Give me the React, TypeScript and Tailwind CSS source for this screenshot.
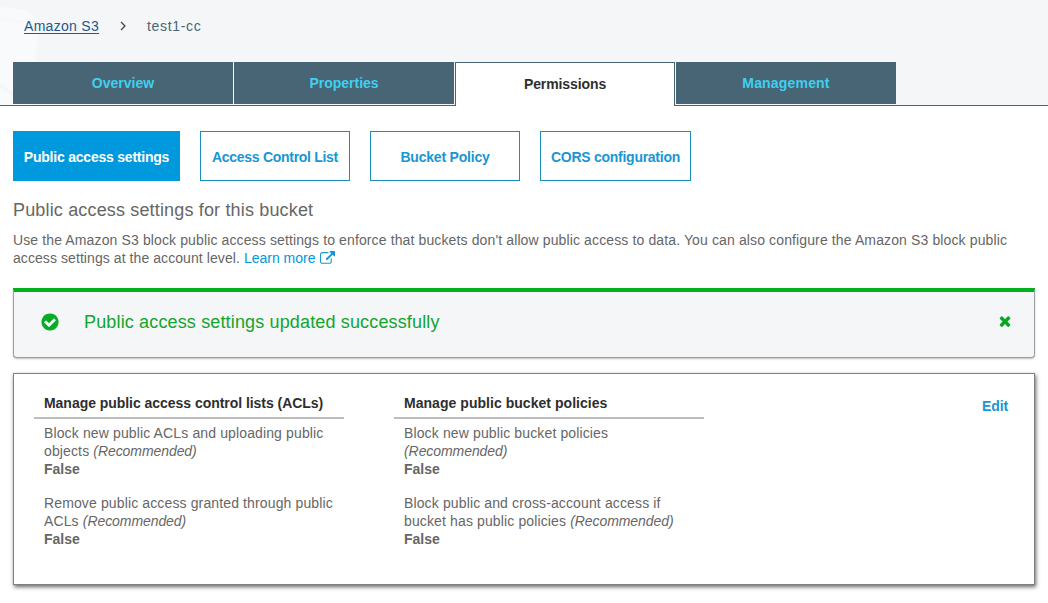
import type { ReactNode } from "react";

const tabs = [
  { label: "Overview", tracking: "tracking-normal" },
  { label: "Properties", tracking: "tracking-normal" },
  { label: "Permissions", tracking: "tracking-[-0.1px]" },
  { label: "Management", tracking: "tracking-[0.18px]" },
];

function Tab({ label, tracking, active }: { label: string; tracking: string; active: boolean }) {
  if (active) {
    return (
      <button className={`h-11 w-[220px] border border-b-0 border-[#486575] bg-white text-[14px] font-bold text-[#2e2e2e] ${tracking}`}>
        {label}
      </button>
    );
  }
  return (
    <button className={`mb-[2px] h-[42px] w-[220px] bg-[#486575] text-[14px] font-bold text-[#3fd0ef] ${tracking}`}>
      {label}
    </button>
  );
}

const pills = [
  { label: "Public access settings", style: "w-[167px] tracking-[-0.22px] border-[#0099dd] bg-[#0099dd] text-white" },
  { label: "Access Control List", style: "w-[150px] tracking-[-0.29px] border-[#1d8dc0] text-[#1996d3]" },
  { label: "Bucket Policy", style: "w-[150px] tracking-[-0.2px] border-[#1d8dc0] text-[#1996d3]" },
  { label: "CORS configuration", style: "w-[151px] tracking-[-0.27px] border-[#1d8dc0] text-[#1996d3]" },
];

function Setting({ children }: { children: ReactNode }) {
  return (
    <div className="mb-4 ml-[10px] w-[292px] leading-[18px]">
      <p className="tracking-[0.13px]">
        {children} <i className="tracking-[-0.07px]">(Recommended)</i>
      </p>
      <p className="font-bold">False</p>
    </div>
  );
}

function Column({ title, tracking, children }: { title: string; tracking: string; children: ReactNode }) {
  return (
    <section className="w-[310px]">
      <h3 className={`mb-[5px] h-[27px] border-b-2 border-[#bdbdbd] pl-[10px] leading-[22px] font-bold text-[#2e2e2e] ${tracking}`}>
        {title}
      </h3>
      {children}
    </section>
  );
}

export default function App() {
  return (
    <div className="h-[603px] overflow-hidden bg-white font-['Liberation_Sans',Arial,sans-serif] text-[14px] text-[#666666]">
      <header className="relative flex h-[106px] flex-col justify-between border-b border-[#486575] bg-[#f4f6f8]">
        <svg className="absolute top-0 left-0" width="50" height="105" viewBox="0 0 50 105" fill="none">
          <path d="M0 7C20 8 38 13 38 22C38 45 35 65 32 105H0Z" fill="#f9fafb" />
          <path d="M0 18C15 23 28 22 38 20" stroke="#f6f8f9" strokeWidth="3" />
          <path d="M0 85L13 95" stroke="#f4f6f8" strokeWidth="4" />
        </svg>
        <nav className="relative flex h-[52px] items-center pl-6">
          <a className="tracking-[0.3px] text-[#20588f] underline underline-offset-2">Amazon S3</a>
          <svg className="mr-5 ml-5" width="8" height="10" viewBox="0 0 8 10" fill="none" stroke="#444" strokeWidth="1.3">
            <path d="M2 1L6 5L2 9" />
          </svg>
          <span className="tracking-[0.65px] text-[#486575]">test1-cc</span>
        </nav>
        <div className="relative -mb-px flex gap-px pl-[13px]">
          {tabs.map((t) => (
            <Tab key={t.label} {...t} active={t.label === "Permissions"} />
          ))}
        </div>
      </header>

      <main className="px-[13px]">
        <div className="mt-[25px] flex gap-5">
          {pills.map((p) => (
            <button key={p.label} className={`h-[50px] border pt-[2px] font-bold whitespace-nowrap ${p.style}`}>
              {p.label}
            </button>
          ))}
        </div>
        <h2 className="mt-[17px] text-[18px] leading-6 tracking-[0.16px]">Public access settings for this bucket</h2>
        <p className="mt-[9px] leading-[18px] tracking-[0.125px] whitespace-nowrap">
          Use the Amazon S3 block public access settings to enforce that buckets don't allow public access to data. You can also configure the Amazon S3 block public
          <br />
          <span className="tracking-[0.075px]">access settings at the account level. </span>
          <a className="tracking-normal text-[#0099dd]">Learn more</a>
          <svg className="ml-[5px] inline-block align-[-3px]" width="15" height="15" viewBox="0 0 1792 1792" fill="#1996d3">
            <path d="M1408 928v320q0 119-84.5 203.5t-203.5 84.5h-832q-119 0-203.5-84.5t-84.5-203.5v-832q0-119 84.5-203.5t203.5-84.5h704q14 0 23 9t9 23v64q0 14-9 23t-23 9h-704q-66 0-113 47t-47 113v832q0 66 47 113t113 47h832q66 0 113-47t47-113v-320q0-14 9-23t23-9h64q14 0 23 9t9 23zm384-864v512q0 26-19 45t-45 19-45-19l-176-176-652 652q-10 10-23 10t-23-10l-114-114q-10-10-10-23t10-23l652-652-176-176q-19-19-19-45t19-45 45-19h512q26 0 45 19t19 45z" />
          </svg>
        </p>

        <div className="mt-[21px] flex h-[70px] items-start rounded-b-[4px] border border-t-4 border-[#9c9fa1] border-t-[#00b01c] bg-[#f4f6f8] pt-[18px] pr-[21px] pl-[26px] shadow-[0_1px_2px_rgba(0,0,0,0.25)]">
          <svg className="mt-[2px]" width="20" height="20" viewBox="0 0 1792 1792" fill="#08ab28">
            <path d="M1412 734q0-28-18-46l-91-90q-19-19-45-19t-45 19l-408 407-226-226q-19-19-45-19t-45 19l-91 90q-18 18-18 46 0 27 18 45l362 362q19 19 45 19 27 0 46-19l543-543q18-18 18-45zm252 162q0 209-103 385.5t-279.5 279.5-385.5 103-385.5-103-279.5-279.5-103-385.5 103-385.5 279.5-279.5 385.5-103 385.5 103 279.5 279.5 103 385.5z" />
          </svg>
          <p className="ml-6 flex-1 text-[18px] leading-6 tracking-[0.15px] text-[#12a52d]">Public access settings updated successfully</p>
          <svg className="mt-[3px]" width="16" height="16" viewBox="0 0 1792 1792" fill="#08a51f">
            <path d="M1490 1322q0 40-28 68l-136 136q-28 28-68 28t-68-28l-294-294-294 294q-28 28-68 28t-68-28l-136-136q-28-28-28-68t28-68l294-294-294-294q-28-28-28-68t28-68l136-136q28-28 68-28t68 28l294 294 294-294q28-28 68-28t68 28l136 136q28 28 28 68t-28 68l-294 294 294 294q28 28 28 68z" />
          </svg>
        </div>

        <div className="mt-[15px] flex h-[212px] gap-[50px] border border-[#808080] bg-white pt-[18px] pl-5 shadow-[1px_2px_4px_rgba(0,0,0,0.6)]">
          <Column title="Manage public access control lists (ACLs)" tracking="tracking-[-0.04px]">
            <Setting>Block new public ACLs and uploading public objects</Setting>
            <Setting>Remove public access granted through public ACLs</Setting>
          </Column>
          <Column title="Manage public bucket policies" tracking="tracking-[0.04px]">
            <Setting>Block new public bucket policies</Setting>
            <Setting>Block public and cross-account access if bucket has public policies</Setting>
          </Column>
          <a className="mt-1 mr-[26px] ml-auto font-bold tracking-[-0.1px] text-[#1996d3]">Edit</a>
        </div>
      </main>
    </div>
  );
}
